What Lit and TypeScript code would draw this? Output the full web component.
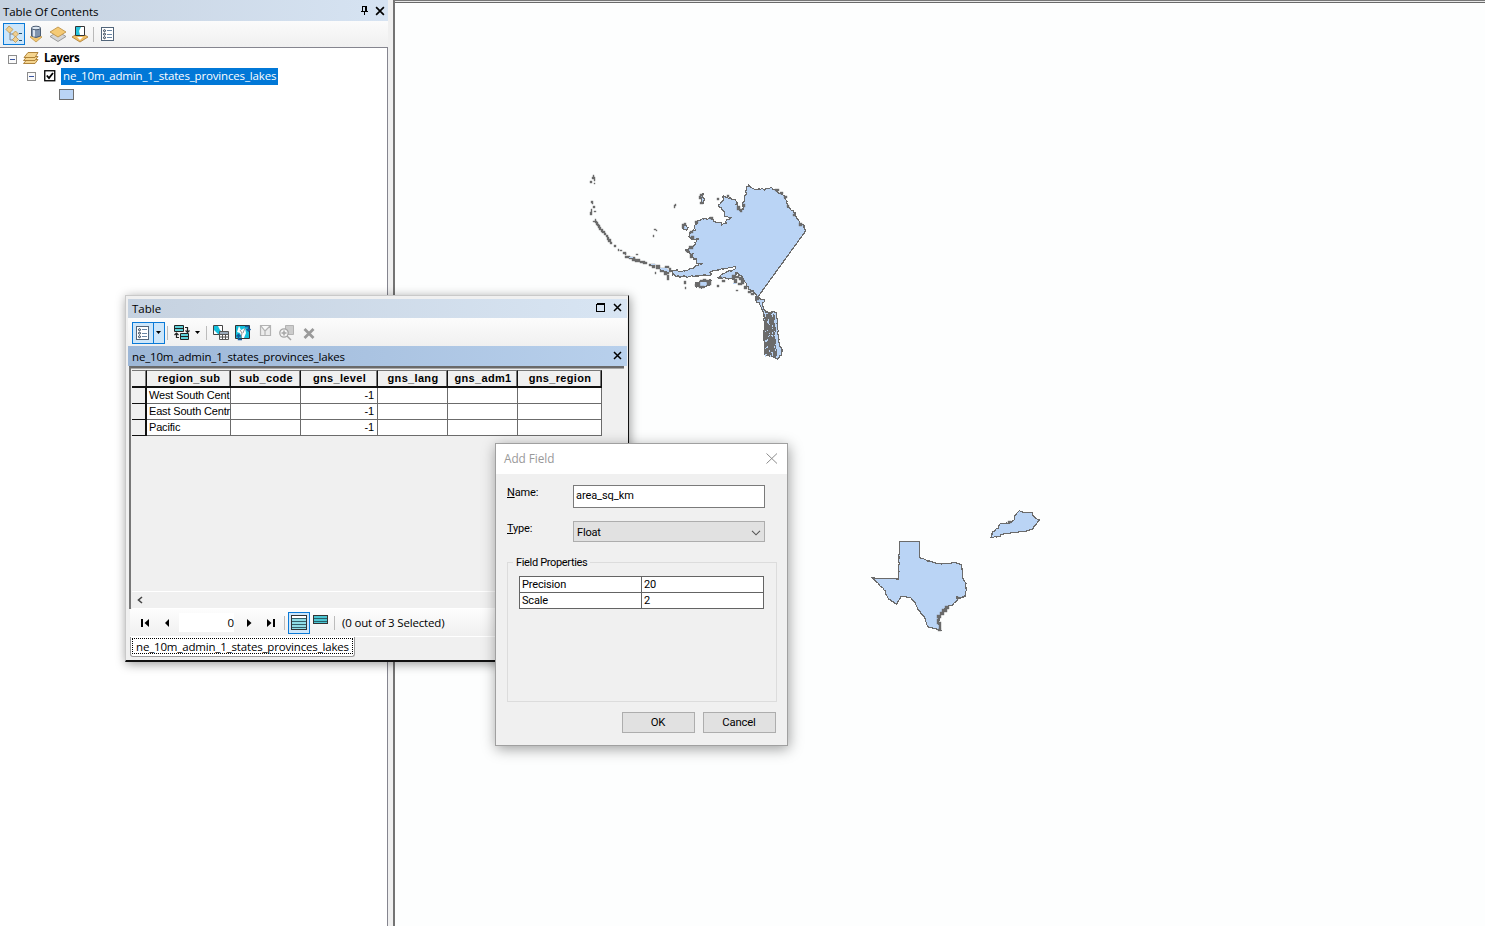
import { LitElement, html, svg, css } from "lit";
import { customElement } from "lit/decorators.js";

type Pt = [number, number, number?];

function random(seed: number) {
  return () => {
    seed = (seed * 48271) % 2147483647;
    return seed / 2147483647;
  };
}

/* Builds an outline; a third value of 1 marks a straight border up to that point. */
function outline(points: Pt[], ox: number, oy: number, rough: number): string {
  const rnd = random(7919);
  const out: string[] = [];
  points.forEach((p, i) => {
    const q = points[(i + points.length - 1) % points.length];
    const x0 = ox + q[0] / 3, y0 = oy + q[1] / 3;
    const x1 = ox + p[0] / 3, y1 = oy + p[1] / 3;
    const n = p[2] ? 1 : Math.max(1, Math.round(Math.hypot(x1 - x0, y1 - y0) / 1.5));
    for (let k = 1; k <= n; k++) {
      const r = k === n ? 0 : rough;
      const x = x0 + ((x1 - x0) * k) / n + (rnd() - 0.5) * r;
      const y = y0 + ((y1 - y0) * k) / n + (rnd() - 0.5) * r;
      out.push(`${x.toFixed(1)} ${y.toFixed(1)}`);
    }
  });
  return "M" + out.join("L") + "Z";
}

const alaska: Pt[] = [[228,45],[236,30],[246,40],[262,44],[285,42],[300,38],[318,48],[330,56],[342,62],[350,78],[352,98],[368,106],[376,120],[388,145],[402,152],[406,168],[264,364,1],[250,352],[240,345],[228,335],[225,322],[218,310],[205,300],[196,292],[192,308],[175,312],[143,308],[160,295],[175,290],[192,284],[196,276],[178,278],[160,282],[140,285],[122,290],[120,302],[90,302],[60,304],[30,306],[8,300],[2,288],[20,284],[34,290],[50,286],[62,280],[75,272],[95,266],[78,265],[78,252],[66,246],[70,236],[52,232],[44,224],[60,220],[75,208],[84,192],[64,192],[56,184],[60,170],[76,165],[72,152],[82,138],[100,132],[124,128],[130,138],[148,142],[154,150],[168,146],[170,134],[184,128],[165,125],[162,114],[144,92],[158,76],[160,62],[175,70],[195,75],[202,90],[208,106],[218,104],[218,82],[224,78]];
const panhandle: Pt[] = [[256,366],[268,368],[284,376],[278,384],[280,396],[288,412],[300,414],[312,410],[320,418],[322,450],[326,490],[328,510],[336,522],[334,540],[322,552],[312,546],[290,540],[286,500],[284,450],[282,424],[276,404],[268,384],[258,376]];
const texas: Pt[] = [[104,124],[163,124,1],[163,172,1],[185,182],[205,187],[230,192],[250,190],[268,187],[290,195],[293,235,1],[303,250],[304,270],[300,290],[284,294],[275,290],[276,302],[262,316],[245,320],[232,336],[222,350],[222,370],[228,390],[210,386,1],[188,380,1],[178,350],[158,328],[148,304],[134,292],[108,290],[95,313],[70,296,1],[60,272],[35,246],[22,234,1],[100,237,1]];
const kentucky: Pt[] = [[377,112],[384,94],[400,84],[404,72],[432,70],[446,60],[450,44],[462,32],[476,38],[500,37],[506,50],[522,60],[512,74],[500,88],[484,93,1],[436,99,1],[408,103,1],[404,109,1]];
const kodiak: Pt[] = [[78,322],[96,318],[124,316],[120,330],[102,338],[78,336]];
const nunivak: Pt[] = [[38,150],[48,150],[54,158],[50,166],[40,162]];
const lawrence: Pt[] = [[92,58],[100,56],[98,66],[103,72],[101,84],[94,84],[95,70],[90,64]];

/* Islets as x, y, width, height. */
const islets = [
  [593,175,1,2],[592,177,3,2],[594,179,1,2],[590,181,2,2],[594,183,1,1],[591,201,2,2],[592,203,1,1],[593,206,2,2],[591,209,1,3],[590,212,2,3],[594,211,2,1],
  [593,221,4,1],[595,219,1,4],[596,222,2,3],[597,224,2,2],[598,225,2,3],[599,227,2,3],[601,229,2,3],[602,231,3,2],[604,233,2,2],[606,235,2,2],[607,237,2,3],[608,239,3,3],[610,242,2,2],[614,245,2,2],[618,249,1,2],[620,250,2,1],[623,252,3,2],[625,253,1,2],
  [625,256,5,2],[629,257,6,2],[632,258,3,3],[635,259,5,3],[636,254,2,1],[640,261,5,2],[643,262,4,2],[649,264,6,2],[652,266,3,2],[656,265,4,4],[660,268,5,4],[664,271,3,4],[667,275,2,5],[666,271,3,3],[665,266,4,2],[669,268,2,4],[655,272,1,2],
  [653,235,1,2],[654,229,2,1],[656,230,1,1],[675,204,1,2],[674,205,1,3],[700,194,3,2],[699,196,2,3],[700,202,3,2],[682,224,2,4],[684,223,2,2],
  [684,281,2,3],[685,287,1,2],[736,290,2,1],[696,283,4,3],[700,280,3,2],[703,279,3,3],[706,280,5,2],[707,282,4,3],[699,286,5,2],[695,284,2,2],[717,285,2,2],[722,280,3,2],[719,277,3,1],
  [732,275,3,3],[735,276,4,2],[734,279,3,4],[739,277,3,3],[741,280,3,4],[738,283,4,2],[744,286,3,3],[748,291,3,2],[751,293,3,2],[756,297,3,3],[717,198,2,2],[737,206,3,4],[740,209,2,3],[743,204,2,3],
  [727,195,2,2],[689,246,4,3],[686,250,3,2],[690,254,2,4],[691,236,3,3],[690,231,3,2],[695,221,3,2],[710,217,3,2],[784,196,3,2],[780,192,3,2],[775,189,4,2],[787,205,2,2],[793,214,2,2],[799,223,3,3],
];
const gulf = [[945,606,4,3],[942,609,5,3],[940,612,4,3],[937,615,4,3],[937,619,2,5],[939,622,2,7],[938,629,3,2],[957,597,2,2],[1008,521,3,2]];
const dice = random(4241);
const inletSpecks = Array.from({ length: 36 }, () => [
  765 + Math.floor(dice() * 11), 315 + Math.floor(dice() * 41), 1, 1 + Math.floor(dice() * 3),
]);

const cross = (s: number) => svg`<svg width=${s} height=${s} viewBox="0 0 9 9"><path d="M1 1 8 8M8 1 1 8" stroke="#000" stroke-width="1.500" fill="none"/></svg>`;
const list = svg`<g shape-rendering="crispEdges"><rect x="2.500" y="2.500" width="12" height="13" fill="#fff" stroke="#52657a"/></g>
  <g fill="none" stroke="#26384d"><circle cx="5.500" cy="5.700" r="1"/><circle cx="5.500" cy="9.200" r="1"/><circle cx="5.500" cy="12.700" r="1"/><path d="M8 5.500h5M8 9.500h5M8 12.500h5" stroke="#6b87a5"/></g>`;
const diamond = (y: number, c: string, s: string) => svg`<path d=${`M1 ${y} 9 ${y - 5} 17 ${y} 9 ${y + 5}Z`} fill=${c} stroke=${s} stroke-width=".8"/>`;

@customElement("contents-panel")
class ContentsPanel extends LitElement {
  static styles = css`
    :host { display: flex; flex-direction: column; background: #fff; font: 11.5px/16px "Open Sans", sans-serif; letter-spacing: -0.16px; color: #000; }
    .title { height: 21px; display: flex; align-items: center; padding: 0 3px; box-sizing: border-box; background: linear-gradient(90deg, #c6d2e0, #d6e3f2); }
    .name { flex: 1; letter-spacing: -0.05px; padding-top: 2px; }
    .title svg { display: block; }
    .pin { margin-right: 6px; }
    .tools { height: 26px; display: flex; align-items: center; padding-left: 3px; background: linear-gradient(#fbfbfb, #f0f0f0); }
    .tool { width: 22px; height: 22px; display: flex; align-items: center; justify-content: center; }
    .on { box-sizing: border-box; border: 1px solid #0a7ad8; background: #cde6fa; }
    .sep { width: 1px; height: 15px; background: #b9b9b9; margin: 0 3px 0 2px; }
    .tree { flex: 1; border-top: 1px solid #85858f; border-right: 1px solid #85858f; padding-top: 2px; }
    .row { height: 18px; display: flex; align-items: center; }
    .root { padding-left: 8px; height: 17px; }
    .root svg.stack { margin: 0 5px 2px 5px; }
    .root b { letter-spacing: -0.42px; font-weight: 700; padding-bottom: 1px; }
    .layer { padding-left: 27px; height: 18px; }
    .layer .check { margin: 0 5px 0 7px; }
    .sel { background: #0178d7; color: #fff; height: 17px; line-height: 15px; padding: 0 2px; width: 213px; white-space: nowrap; }
    .symbol { padding-left: 59px; height: 18px; }
    .patch { width: 13px; height: 9px; border: 1px solid #6e6e6e; background: #bad4f5; }
  `;
  minus() {
    return html`<svg width="10" height="10" shape-rendering="crispEdges"><rect x=".5" y="1.500" width="8" height="8" fill="#fafafa" stroke="#8c8c8c"/><path d="M2 5.500h5" stroke="#3a55a0"/></svg>`;
  }
  render() {
    return html`
      <div class="title"><span class="name">Table Of Contents</span>
        <svg class="pin" width="9" height="10" shape-rendering="crispEdges"><path d="M2.500 5V.5h4V5M1 5.500h7M4.500 6v3" fill="none" stroke="#000"/><path d="M5.500 1v4" stroke="#000"/></svg>
        ${cross(10)}
      </div>
      <div class="tools">
        <div class="tool on"><svg width="18" height="18"><path d="M5 7v8h4M5 9h4" fill="none" stroke="#7a8899"/><path d="M1 4.500 4 1l4 3.500L4.500 8ZM7.500 9l3-3 3 3-3 3ZM7.500 14.500l3-3 3 3-3 3Z" fill="#f0cf90" stroke="#b98c3e" stroke-width=".7"/><path d="M14 8.500h3M14 15.500h3" stroke="#17517e"/></svg></div>
        <div class="tool"><svg width="18" height="18"><path d="M3 12 9 8l6 4-6 5Z" fill="#f3c873" stroke="#b98c3e" stroke-width=".7"/><path d="M4.500 3v8q4.500 3 9 0V3" fill="#7f93ad" stroke="#4c5d73"/><path d="M6 4v7.500h2V4" fill="#d8e2ee"/><ellipse cx="9" cy="3" rx="4.500" ry="1.800" fill="#dce6f1" stroke="#4c5d73"/></svg></div>
        <div class="tool"><svg width="18" height="18">${diamond(11.5, "#d5d5d5", "#888")}${diamond(7, "#f5ca75", "#b98c3e")}</svg></div>
        <div class="tool"><svg width="18" height="18">${diamond(12, "#f0bd62", "#a97b34")}<path d="M4.500 1.500h9v9h-9Z" fill="#fff" stroke="#333"/><path d="M5 2h5l-2 4 1 4H5Z" fill="#25c3dc"/><path d="M6 12h6l-3 3Z" fill="#fff"/></svg></div>
        <div class="sep"></div>
        <div class="tool"><svg width="18" height="18">${list}</svg></div>
      </div>
      <div class="tree">
        <div class="row root">${this.minus()}
          <svg class="stack" width="16" height="14"><g fill="#f5d58f" stroke="#a8792c" stroke-width=".9"><path d="M.5 12.500 4 8.500h11l-3 4Z"/><path d="M.5 9.500 4 5.500h11l-3 4Z"/><path d="M1 6.500 5 1.500h10l-3 5Z"/></g></svg>
          <b>Layers</b></div>
        <div class="row layer">${this.minus()}
          <svg class="check" width="12" height="12"><rect x=".75" y=".75" width="10" height="10" fill="#fff" stroke="#000" stroke-width="1.300"/><path d="M2.800 5.500 5 8l4-5" fill="none" stroke="#000" stroke-width="1.800"/></svg>
          <span class="sel">ne_10m_admin_1_states_provinces_lakes</span></div>
        <div class="row symbol"><div class="patch"></div></div>
      </div>`;
  }
}

@customElement("map-view")
class MapView extends LitElement {
  static styles = css`
    :host { display: block; overflow: hidden; background: #fdfefe; }
    .canvas { display: block; }
    .land { fill: #bad4f5; stroke: #6b6b6b; stroke-width: 1.2; }
    .dark { fill: #6b6b6b; }
    .speck { fill: #6b6b6b; stroke: #6b6b6b; stroke-width: 0.4; shape-rendering: auto; }
    .light { fill: #bad4f5; }
  `;
  render() {
    const shape = (p: Pt[], x: number, y: number, r: number) => svg`<path class="land" d=${outline(p, x, y, r)}/>`;
    const speck = ([x, y, w, h]: number[]) => svg`<rect class="speck" x=${x} y=${y} width=${w} height=${h}/>`;
    return html`<svg class="canvas" width="1090" height="923" viewBox="395 3 1090 923" shape-rendering="crispEdges">
      ${shape(alaska, 670.3, 175, 2)}${shape(panhandle, 670, 175, 1.6)}
      <path class="dark" d="M766 314l3-1 2 2 3-1 1 2v8l1 5-1 6 1 7 1 14-3 2-5-2-5-1v-8l-1-12 1-10z"/>
      ${shape(kodiak, 670, 175, 1.6)}${shape(nunivak, 670, 175, 1)}${shape(lawrence, 670, 175, 0.3)}
      ${islets.map(speck)}
      ${inletSpecks.map(([x, y, w, h]) => svg`<rect class="light" x=${x} y=${y} width=${w} height=${h}/>`)}
      <path class="light" d="M660 268l6 0 3 2 0 2-4-1-5-2zM651 264h4v1h-4zM629 257h4v1h-4zM733 283h3v1h-3zM701 282h5v3h-5z"/>
      ${shape(texas, 865, 500, 0.9)}${shape(kentucky, 865.3, 500, 1.2)}
      ${gulf.map(speck)}
    </svg>`;
  }
}

@customElement("table-window")
class TableWindow extends LitElement {
  static styles = css`
    :host { display: flex; flex-direction: column; box-sizing: border-box; background: #f0f0f0; border: 1px solid #c9c9c9; border-right: 1px solid #111; border-bottom: 2px solid #111; padding: 3px 1px 3px 2px; font: 11.5px/16px "Open Sans", sans-serif; letter-spacing: -0.17px; color: #000; box-shadow: 1px 2px 10px rgba(0,0,0,.4); }
    .title { height: 19px; display: flex; align-items: center; padding: 0 5px 0 4px; background: linear-gradient(90deg, #c6d2e0, #d8e5f3); }
    .title svg { margin-bottom: 1px; }
    .grow { flex: 1; }
    .title .grow { letter-spacing: 0; padding-top: 1px; }
    .title .max { margin-right: 7px; }
    .tools { height: 28px; box-sizing: border-box; display: flex; align-items: center; padding: 2px 0 0 4px; background: linear-gradient(#fcfcfc, #f0f0f0); }
    .split { display: flex; width: 33px; height: 22px; box-sizing: border-box; border: 1px solid #0a7ad8; background: #cde6fa; align-items: center; }
    .drop { width: 11px; height: 20px; border-left: 1px solid #0a7ad8; display: flex; align-items: center; justify-content: center; }
    .split .ico { margin: 0 1px; }
    .sep { width: 1px; height: 14px; background: #bcbcbc; }
    .tools svg { display: block; }
    .a { margin-left: 2px; } .b { margin-left: 6px; }
    .m3 { margin-left: 3px; } .m4 { margin-left: 4px; } .m5 { margin-left: 5px; } .m7 { margin-left: 7px; }
    .caption { height: 20px; display: flex; align-items: center; padding: 0 5px 0 4px; background: linear-gradient(90deg, #9db7d7, #b8d0ec); }
    .caption .grow { padding-top: 2px; }
    .view { height: 241px; box-sizing: border-box; height: 245px; display: flex; flex-direction: column; border-top: 2px solid #696969; border-left: 2px solid #777; margin-right: 3px; padding: 2px 0 0 1px; box-shadow: inset 0 1px #a8a8a8; margin-left: 1px; }
    .grid { display: grid; grid-template-columns: 15px 84px 70px 77px 70px 70px 84px; width: 470px; font: 11px/15px "Liberation Sans", sans-serif; }
    .h { height: 18px; box-sizing: border-box; border-right: 1px solid #111; border-bottom: 2px solid #111; border-top: 1px solid #777; text-align: center; font-weight: 700; line-height: 15px; letter-spacing: 0.33px; padding-left: 1px; box-shadow: inset -1px 0 #777; }
    .c { height: 16px; box-sizing: border-box; border-right: 1px solid #6b6b6b; border-bottom: 1px solid #6b6b6b; background: #fff; white-space: nowrap; padding-left: 2px; letter-spacing: -0.17px; line-height: 14px; }
    .s { border-right: 2px solid #111; background: #f0f0f0; border-bottom-color: #111; }
    .n { text-align: right; padding-right: 3px; }
    .scroll { margin-top: auto; height: 16px; border-top: 1px solid #fff; border-bottom: 1px solid #fff; display: flex; align-items: center; padding-left: 5px; }
    .nav { height: 27px; display: flex; align-items: center; background: linear-gradient(#fdfdfd, #f0f0f0); border-bottom: 1px solid #fff; margin-left: 2px; padding-left: 11px; }
    .nav svg { display: block; }
    .num { width: 55px; height: 19px; line-height: 19px; background: #fff; text-align: right; margin: 0 13px 0 9px; box-sizing: border-box; }
    .all { width: 22px; height: 22px; box-sizing: border-box; border: 1px solid #0a7ad8; background: #cde6fa; display: flex; align-items: center; justify-content: center; }
    .nav .some { margin-bottom: 4px; }
    .tab { width: 225px; height: 20px; box-sizing: border-box; border: 1px solid #999; border-top: 0; border-radius: 0 0 3px 3px; background: #fff; margin-left: 2px; padding: 2px 2px; display: flex; }
    .focus { box-sizing: border-box; width: 219px; height: 14px; outline: 1px dotted #000; padding-left: 3px; line-height: 16px; white-space: nowrap; }
  `;
  render() {
    const rows = ["West South Cent", "East South Centr", "Pacific"];
    const heads = ["", "region_sub", "sub_code", "gns_level", "gns_lang", "gns_adm1", "gns_region"];
    return html`
      <div class="title"><span class="grow">Table</span>
        <svg class="max" width="10" height="9" shape-rendering="crispEdges"><path d="M.5 1.500h8v7h-8ZM.5.5h8.500" fill="none" stroke="#000"/></svg>${cross(9)}</div>
      <div class="tools">
        <div class="split"><svg class="ico" width="19" height="18">${list}</svg><div class="drop"><svg width="5" height="3"><path d="M0 0h5L2.500 3Z"/></svg></div></div>
        <div class="sep a"></div>
        <svg class="m5" width="18" height="18"><g fill="#5ed0d8" stroke="#222"><path d="M1.500 1.500h9v6h-9ZM7.500 9.500h8v6h-8ZM1 4.500h9M7 12.500h8"/><path d="M12 3.500h2.500V8M12.500 6.500l2 2 2-2M6 13.500H3.500V9M1.500 11l2-2 2 2" fill="none" stroke-width="1.200"/></g></svg>
        <svg class="m4" width="5" height="3"><path d="M0 0h5L2.500 3Z"/></svg>
        <div class="sep b"></div>
        <svg class="m5" width="18" height="18"><path d="M1.500 1.500h9v9h-9Z" fill="#fff" stroke="#444"/><path d="M2 2h4l2 4 2 2v2H6L2 6Z" fill="#13bfdc"/><path d="M7.500 7.500h9v8h-9ZM7.500 10.500h9M7.500 13h9M10.500 10v6M13.500 10v6" fill="#fff" stroke="#555"/><path d="M8 8h8v2H8z" fill="#9aa9b8"/></svg>
        <svg class="m5" width="17" height="18"><path d="M.5 1.500h14v13h-14Z" fill="#13bfdc" stroke="#333"/><path d="M4 2l2 4 4-2 1 5-2 5H7L5 9 2 8Z" fill="#fff"/><path d="M5 6l2 3-1 5M10 4l-2 5" stroke="#666" fill="none" stroke-width=".7"/><path d="M10 2.500h3.500v4M11.500 5l2 2 2-2M7 15.500H3.500V11M1.500 12.500l2-2 2 2" fill="none" stroke="#125a9c" stroke-width="1.500"/></svg>
        <svg class="m7" width="16" height="18"><path d="M1.500 1.500h10v10h-10ZM2 2l4 5 5-5M6 7v4" fill="#ececec" stroke="#b3b3b3" stroke-width="1.200"/></svg>
        <svg class="m3" width="17" height="18"><path d="M7.500 1.500h8v9h-8Z" fill="#ccc" stroke="#b3b3b3"/><circle cx="6" cy="9" r="4.200" fill="#f4f4f4" stroke="#a5a5a5" stroke-width="1.300"/><path d="M3.500 9h5M6 6.500v5M9 12l4 4" stroke="#a5a5a5" stroke-width="1.500"/></svg>
        <svg class="m7" width="14" height="14"><path d="m2.500 3 9 9m0-9-9 9" stroke="#9a9a9a" stroke-width="2.800"/></svg>
      </div>
      <div class="caption"><span class="grow">ne_10m_admin_1_states_provinces_lakes</span>${cross(9)}</div>
      <div class="view">
        <div class="grid">
          ${heads.map((h) => html`<div class="h">${h}</div>`)}
          ${rows.map((r) => html`<div class="c s"></div><div class="c">${r}</div><div class="c"></div><div class="c n">-1</div><div class="c"></div><div class="c"></div><div class="c"></div>`)}
        </div>
        <div class="scroll"><svg width="6" height="8"><path d="M5 1 1.500 4 5 7" fill="none" stroke="#444" stroke-width="1.600"/></svg></div>
      </div>
      <div class="nav">
        <svg width="9" height="8"><path d="M0 0h2v8H0zM8 0v8L3.500 4Z"/></svg>
        <svg width="20" height="8"><path d="M19 0v8L15 4Z"/></svg>
        <div class="num">0</div>
        <svg width="20" height="8"><path d="M0 0v8l4.500-4Z"/></svg>
        <svg width="17" height="8"><path d="M0 0v8l4.500-4ZM6 0h2v8H6z"/></svg>
        <div class="sep"></div>
        <div class="all m3"><svg width="16" height="16" shape-rendering="crispEdges"><path d="M.5.5h15v14H.5Z" fill="#8fdde6" stroke="#333"/><path d="M1 3.500h14M1 6.500h14M1 9.500h14M1 12.500h14" stroke="#36606a"/><path d="M1 1h14v2H1z" fill="#fff"/></svg></div>
        <svg class="some" width="21" height="14" shape-rendering="crispEdges"><path d="M3.500 1.500h14v8h-14Z" fill="#4cc5d2" stroke="#333"/><path d="M4 4.500h13M4 7.500h13" stroke="#27606a"/></svg>
        <div class="sep m3"></div>
        <span class="m7">(0 out of 3 Selected)</span>
      </div>
      <div class="tab"><span class="focus">ne_10m_admin_1_states_provinces_lakes</span></div>`;
  }
}

@customElement("add-field-dialog")
class AddFieldDialog extends LitElement {
  static styles = css`
    :host { display: flex; flex-direction: column; box-sizing: border-box; background: #f0f0f0; border: 1px solid #a0a0a0; box-shadow: 1px 3px 13px rgba(0,0,0,.38); font: 11px/14px "Roboto", "Liberation Sans", sans-serif; letter-spacing: -0.17px; color: #000; }
    .title { height: 30px; box-sizing: border-box; display: flex; align-items: center; justify-content: space-between; background: #fff; padding: 0 9px 2px 8px; color: #999; font: 11.8px/16px "Open Sans", sans-serif; letter-spacing: -0.05px; }
    .body { padding: 11px 10px 0 11px; display: flex; flex-direction: column; }
    .field { display: flex; }
    .field label { width: 66px; padding-top: 1px; }
    .input { box-sizing: border-box; width: 192px; height: 23px; background: #fff; border: 1px solid #7a7a7a; padding: 3px 2px; letter-spacing: -0.08px; }
    .select { box-sizing: border-box; width: 192px; height: 21px; background: #e1e1e1; border: 1px solid #adadad; padding: 2px 3px 0; display: flex; align-items: center; justify-content: space-between; margin-top: 13px; }
    .type label { margin-top: 13px; }
    fieldset { margin: 13px 0 0; height: 147px; border: 1px solid #dcdcdc; padding: 0 11px; box-sizing: border-box; }
    legend { padding: 1px 3px 0; margin-left: -6px; letter-spacing: -0.34px; }
    .props { display: grid; grid-template-columns: 122px 122px; margin-top: 6px; border: 1px solid #646464; border-bottom: 0; border-right: 0; width: 244px; letter-spacing: -0.16px; }
    .p { height: 16px; box-sizing: border-box; border-bottom: 1px solid #646464; border-right: 1px solid #646464; background: #fff; padding: 0 2px; line-height: 15px; }
    .buttons { display: flex; justify-content: flex-end; gap: 8px; margin-top: 10px; padding-right: 1px; }
    .btn { width: 73px; height: 21px; box-sizing: border-box; border: 1px solid #adadad; background: #e1e1e1; text-align: center; line-height: 20px; font-size: 11.3px; padding-right: 1px; }
  `;
  render() {
    return html`
      <div class="title"><span>Add Field</span><svg width="12" height="11"><path d="M.5.5l10.500 10m0-10-10.500 10" stroke="#8c8c8c"/></svg></div>
      <div class="body">
        <div class="field"><label><u>N</u>ame:</label><div class="input">area_sq_km</div></div>
        <div class="field type"><label><u>T</u>ype:</label><div class="select"><span>Float</span><svg width="10" height="6"><path d="M1 .8l4 4 4-4" fill="none" stroke="#555" stroke-width="1.100"/></svg></div></div>
        <fieldset><legend>Field Properties</legend>
          <div class="props"><div class="p">Precision</div><div class="p">20</div><div class="p">Scale</div><div class="p">2</div></div>
        </fieldset>
        <div class="buttons"><div class="btn">OK</div><div class="btn">Cancel</div></div>
      </div>`;
  }
}

@customElement("app-root")
class AppRoot extends LitElement {
  static styles = css`
    :host { display: block; }
    .desk { position: relative; display: grid; grid-template-columns: 388px 7px 1090px; height: 926px; overflow: hidden; background: #f0f0f0; }
    .gap { box-sizing: border-box; border-right: 2px solid #747474; }
    .right { display: flex; flex-direction: column; }
    .edge { height: 3px; box-sizing: border-box; border-top: 1px solid #777; border-bottom: 1px solid #696969; background: #e8e8e8; }
    .table { position: absolute; left: 125px; top: 295px; width: 504px; height: 367px; }
    .dialog { position: absolute; left: 495px; top: 443px; width: 293px; height: 303px; }
  `;
  render() {
    return html`<div class="desk">
      <contents-panel></contents-panel>
      <div class="gap"></div>
      <div class="right"><div class="edge"></div><map-view></map-view></div>
      <table-window class="table"></table-window>
      <add-field-dialog class="dialog"></add-field-dialog>
    </div>`;
  }
}
